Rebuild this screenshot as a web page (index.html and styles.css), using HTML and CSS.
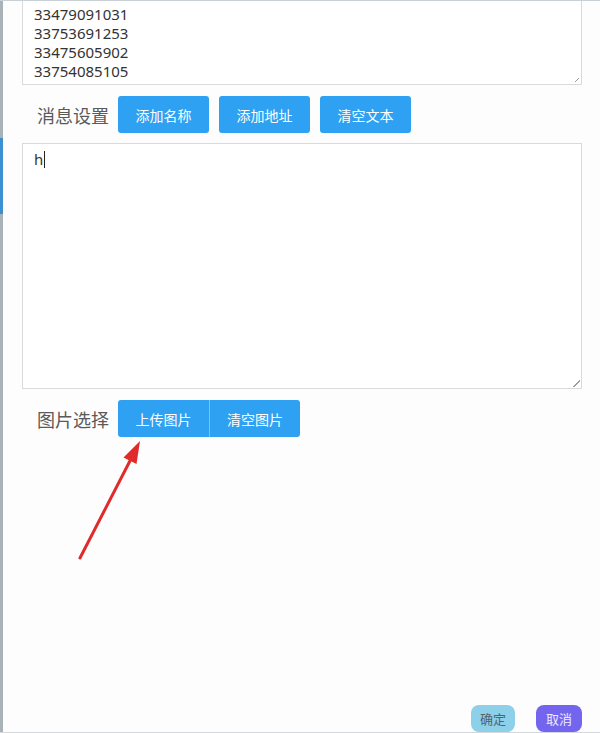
FILE: index.html
```html
<!DOCTYPE html>
<html lang="zh">
<head>
<meta charset="utf-8">
<title>消息设置</title>
<link rel="stylesheet" href="styles.css">
</head>
<body>
<div class="page">
  <div class="strip"><div class="strip-blue"></div></div>
  <div class="main">
    <div class="box box-list">
      <div>33479091031</div>
      <div>33753691253</div>
      <div>33475605902</div>
      <div>33754085105</div>
    </div>
    <div class="row">
      <span class="label">消息设置</span>
      <div class="btns">
        <button class="btn">添加名称</button>
        <button class="btn">添加地址</button>
        <button class="btn">清空文本</button>
      </div>
    </div>
    <div class="box box-msg">h<span class="caret"></span></div>
    <div class="row">
      <span class="label">图片选择</span>
      <div class="group">
        <button class="btn">上传图片</button>
        <button class="btn btn-join">清空图片</button>
      </div>
    </div>
    <div class="footer">
      <button class="fbtn ok">确定</button>
      <button class="fbtn cancel">取消</button>
    </div>
  </div>
  <svg class="arrow" width="600" height="733" viewBox="0 0 600 733">
    <line x1="80" y1="558" x2="133" y2="455" stroke="#e12b2b" stroke-width="3" stroke-linecap="round"/>
    <polygon points="140,441 136.5,464 123.5,457.5" fill="#e12b2b"/>
  </svg>
</div>
</body>
</html>
```
FILE: styles.css
```css
html, body {
  margin: 0;
  padding: 0;
  background: #ffffff;
}
body {
  width: 600px;
  height: 733px;
  overflow: hidden;
  font-family: "Noto Sans", "Noto Sans CJK SC", sans-serif;
}
.page {
  position: relative;
  display: flex;
  width: 600px;
  height: 733px;
  box-sizing: border-box;
  border-top: 1px solid #c9d0d6;
  border-bottom: 1px solid #d6d9dc;
  background: #fdfdfd;
}
.strip {
  width: 3px;
  background: #a9b2b6;
  display: flex;
  flex-direction: column;
}
.strip-blue {
  margin-top: 137px;
  height: 76px;
  background: #3d8fcf;
}
.main {
  flex: 1;
  display: flex;
  flex-direction: column;
  padding: 0 18px 0 19px;
}
.box {
  position: relative;
  border: 1px solid #dadada;
  background: #ffffff;
  color: #333333;
  font-size: 15px;
  line-height: 19px;
}
.box-list {
  border-top: 0;
  padding: 4px 11px 3px;
}
.box-list::after {
  content: "";
  position: absolute;
  right: 2px;
  bottom: 2px;
  width: 4px;
  height: 4px;
  background: linear-gradient(135deg, transparent 45%, #9a9a9a 45%, #9a9a9a 60%, transparent 60%);
}
.box-msg {
  height: 244px;
  padding: 6px 11px;
  box-sizing: border-box;
  height: 246px;
  margin-top: 10px;
}
.box-msg::after {
  content: "";
  position: absolute;
  right: 1px;
  bottom: 1px;
  width: 10px;
  height: 10px;
  background: repeating-linear-gradient(135deg, transparent 0 3px, #9c9c9c 3px 4px, transparent 4px 6px);
  -webkit-mask: linear-gradient(315deg, #000 50%, transparent 50%);
  mask: linear-gradient(315deg, #000 50%, transparent 50%);
}
.caret {
  display: inline-block;
  width: 1px;
  height: 17px;
  background: #222222;
  vertical-align: -3px;
  margin-left: 1px;
}
.row {
  display: flex;
  align-items: center;
  margin-top: 11px;
  height: 37px;
}
.label {
  margin-left: 15px;
  width: 72px;
  margin-right: 9px;
  font-family: "Noto Sans CJK SC", sans-serif;
  font-size: 18px;
  color: #5a5a5a;
  white-space: nowrap;
}
.btns {
  display: flex;
  gap: 10px;
}
.group {
  display: flex;
}
.btn {
  width: 91px;
  height: 37px;
  border: 0;
  border-radius: 3px;
  background: #2ea1f2;
  color: #ffffff;
  font-family: "Noto Sans CJK SC", sans-serif;
  font-size: 14px;
  padding: 0;
}
.group .btn {
  border-radius: 3px 0 0 3px;
}
.group .btn-join {
  border-radius: 0 3px 3px 0;
  border-left: 1px solid #7cc3f5;
}
.footer {
  margin-top: auto;
  display: flex;
  justify-content: flex-end;
  gap: 21px;
  padding-bottom: 0;
}
.fbtn {
  height: 27px;
  border: 0;
  border-radius: 8px;
  font-family: "Noto Sans CJK SC", sans-serif;
  font-size: 13px;
  padding: 0;
}
.ok {
  width: 44px;
  background: #8dd0ea;
  color: #51636c;
}
.cancel {
  width: 46px;
  background: #7465ee;
  color: #ece9ff;
}
.arrow {
  position: absolute;
  left: 0;
  top: -1px;
  pointer-events: none;
}
```
